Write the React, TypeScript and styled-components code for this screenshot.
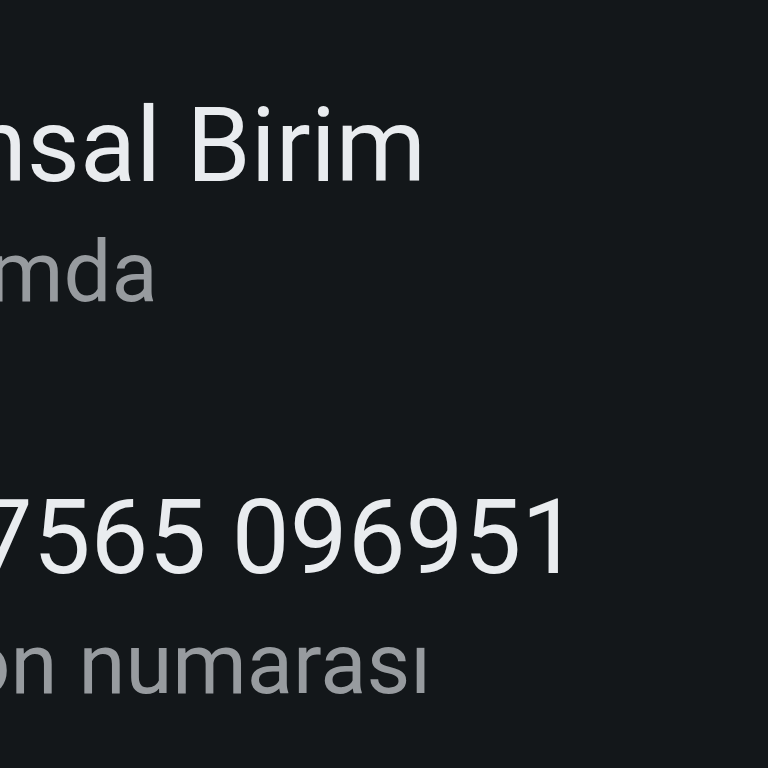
import React from "react";
import styled, { createGlobalStyle } from "styled-components";

const GlobalStyle = createGlobalStyle`
  html, body {
    margin: 0;
    padding: 0;
    background: #13171a;
  }
  body {
    font-family: Roboto, "Noto Sans", sans-serif;
    overflow: hidden;
  }
`;

const Screen = styled.div`
  width: 768px;
  height: 768px;
  overflow: hidden;
  background: #13171a;
`;

const Details = styled.div`
  display: flex;
  flex-direction: column;
  gap: 155px;
  padding-top: 85px;
  margin-left: -225px;
`;

const InfoBlock = styled.section`
  display: flex;
  flex-direction: column;
  gap: 16px;
`;

const Primary = styled.div`
  font-size: 103px;
  line-height: 121px;
  color: #e9ecef;
  white-space: nowrap;
`;

const Secondary = styled.div`
  font-size: 85px;
  line-height: 100px;
  color: #979b9f;
  white-space: nowrap;
`;

const info = [
  { value: "Finansal Birim", label: "Hakkımda" },
  { value: "+44 7565 096951", label: "Telefon numarası" },
];

export default function App() {
  return (
    <Screen>
      <GlobalStyle />
      <Details>
        {info.map((item) => (
          <InfoBlock key={item.value}>
            <Primary>{item.value}</Primary>
            <Secondary>{item.label}</Secondary>
          </InfoBlock>
        ))}
      </Details>
    </Screen>
  );
}
